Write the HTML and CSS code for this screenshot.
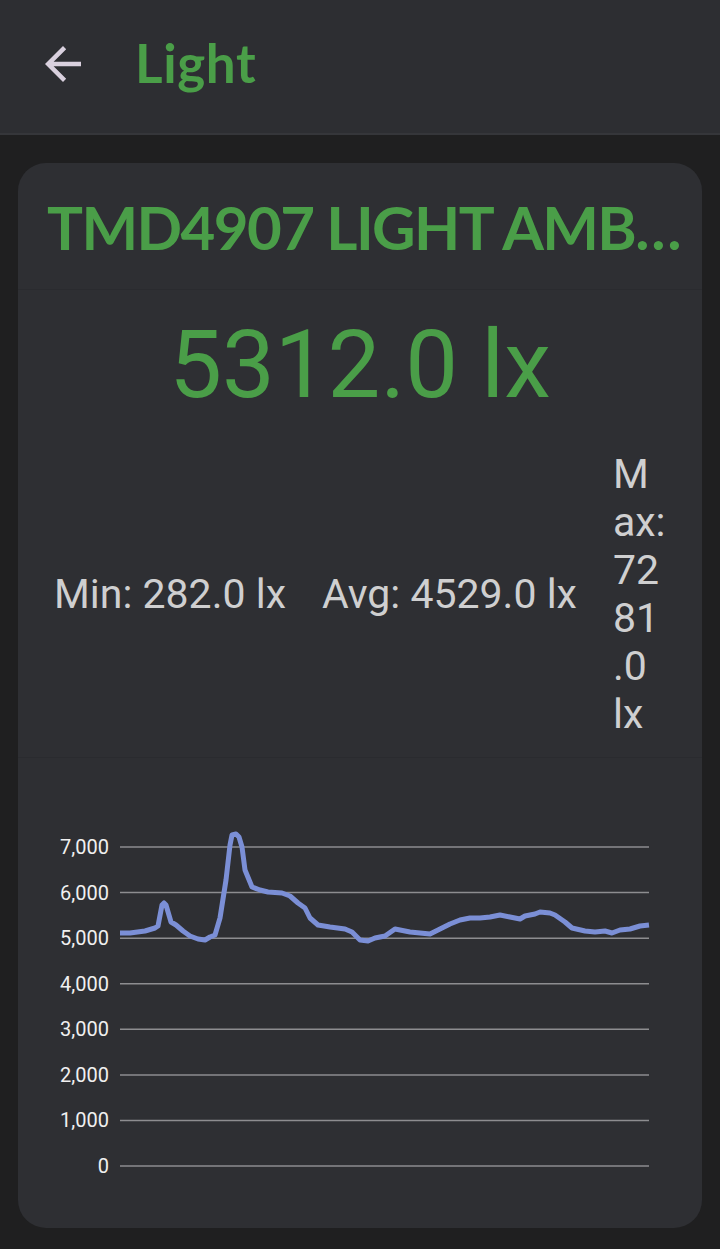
FILE: index.html
```html
<!DOCTYPE html>
<html lang="en">
<head>
    <meta charset="UTF-8">
    <meta name="viewport" content="width=device-width, initial-scale=1.0">
    <title>Light</title>
    <link rel="stylesheet" href="styles.css">
</head>
<body>
    <!-- Barra superior -->
    <header class="topBar">
        <button class="backButton" aria-label="Back">
            <svg width="54" height="54" viewBox="0 0 24 24">
                <path d="M20 11H7.83l5.59-5.59L12 4l-8 8 8 8 1.41-1.41L7.83 13H20v-2z" fill="#d9d0de"/>
            </svg>
        </button>
        <h1 class="pageTitle">Light</h1>
    </header>

    <div class="card">
        <div class="cardSection titleSection">
            <h2 class="sensorName">TMD4907 LIGHT AMBIENT Light Sensor</h2>
        </div>

        <div class="cardSection valueSection">
            <div class="currentValue">5312.0 lx</div>
            <div class="stats">
                <span class="stat">Min: 282.0 lx</span>
                <span class="stat">Avg: 4529.0 lx</span>
                <span class="stat statMax">Max: 7281.0 lx</span>
            </div>
        </div>

        <div class="cardSection chartSection">
            <svg class="chart" width="684" height="470" viewBox="18 758 684 470">
                <g class="gridLines">
                    <line x1="120" y1="847" x2="649" y2="847"/>
                    <line x1="120" y1="892.6" x2="649" y2="892.6"/>
                    <line x1="120" y1="938.2" x2="649" y2="938.2"/>
                    <line x1="120" y1="983.7" x2="649" y2="983.7"/>
                    <line x1="120" y1="1029.3" x2="649" y2="1029.3"/>
                    <line x1="120" y1="1074.9" x2="649" y2="1074.9"/>
                    <line x1="120" y1="1120.4" x2="649" y2="1120.4"/>
                    <line x1="120" y1="1166" x2="649" y2="1166"/>
                </g>
                <g class="axisLabels">
                    <text x="109" y="854">7,000</text>
                    <text x="109" y="899.6">6,000</text>
                    <text x="109" y="945.2">5,000</text>
                    <text x="109" y="990.7">4,000</text>
                    <text x="109" y="1036.3">3,000</text>
                    <text x="109" y="1081.9">2,000</text>
                    <text x="109" y="1127.4">1,000</text>
                    <text x="109" y="1173">0</text>
                </g>
                <polyline class="dataLine" points="
                    120,933 130,933 145,931 155,928 158,926 162,905 164,903 166,905 171,922 176,925
                    183,931 190,936 198,939 205,940 210,937 215,935 220,918 226,880 230,845 232,835
                    236,834 239,837 242,847 245,870 252,887 260,890 268,892 282,893 290,896 298,903
                    305,908 310,918 318,925 330,927 345,929 352,932 360,940 368,941 375,938 385,936
                    395,929 400,930 410,932 420,933 430,934 440,929 450,924 460,920 470,918 480,918
                    490,917 500,915 510,917 520,919 525,916 535,914 540,912 550,913 555,915 565,922
                    572,928 585,931 595,932 605,931 612,933 620,930 630,929 640,926 649,925"/>
            </svg>
        </div>
    </div>
</body>
</html>
```

FILE: styles.css
```css
body {
    margin: 0;
    background-color: #1f1f20;
    font-family: Roboto, "Liberation Sans", sans-serif;
}
.topBar {
    height: 135px;
    background-color: #2d2e32;
    border-bottom: 2px solid #35363a;
    display: flex;
    align-items: flex-start;
    box-sizing: border-box;
}
.backButton {
    background: none;
    border: none;
    padding: 0;
    margin: 37px 0 0 36px;
    width: 54px;
    height: 54px;
    display: block;
}
.pageTitle {
    margin: 31px 0 0 45px;
    font-family: Lato, sans-serif;
    font-weight: bold;
    font-size: 53px;
    letter-spacing: 0.6px;
    line-height: 1.2;
    color: #4a9e48;
}
.card {
    margin: 28px 18px 0;
    background-color: #2e2f33;
    border-radius: 28px;
    overflow: hidden;
}
.cardSection {
    border-top: 1px solid #2a2b2f;
}
.cardSection:first-child {
    border-top: none;
}
.titleSection {
    padding: 28px 10px 26px 29px;
}
.sensorName {
    margin: 0;
    font-family: Lato, sans-serif;
    font-weight: bold;
    font-size: 60px;
    letter-spacing: -1.6px;
    line-height: 1.2;
    color: #4a9e48;
    white-space: nowrap;
    overflow: hidden;
    text-overflow: ellipsis;
}
.valueSection {
    padding: 28px 0 19px;
}
.currentValue {
    text-align: center;
    font-size: 94px;
    line-height: 1;
    color: #4a9e48;
}
.stats {
    margin-top: 38px;
    display: flex;
    align-items: center;
    padding: 0 18px;
}
.stat {
    flex: none;
    padding: 0 18px;
    font-size: 41px;
    line-height: 48px;
    color: #cfcfd0;
}
.statMax {
    width: 54px;
    overflow-wrap: anywhere;
}
.chartSection {
    height: 470px;
}
.chart {
    display: block;
}
.gridLines line {
    stroke: #8d8d90;
    stroke-width: 1.5;
}
.axisLabels text {
    font-family: Roboto, sans-serif;
    font-size: 20px;
    fill: #f0f0f0;
    text-anchor: end;
}
.dataLine {
    fill: none;
    stroke: #7b8fd6;
    stroke-width: 5;
    stroke-linejoin: round;
}
```
